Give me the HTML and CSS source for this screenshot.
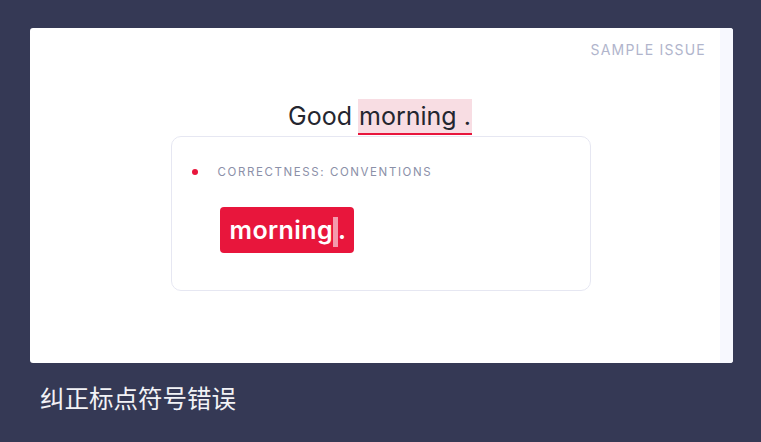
FILE: index.html
```html
<!DOCTYPE html>
<html>
<head>
<meta charset="utf-8">
<link rel="stylesheet" href="styles.css">
</head>
<body>
<div class="page">
  <div class="panel">
    <div class="panel-main">
      <div class="tag">SAMPLE ISSUE</div>
      <div class="sentence">Good <span class="flag">morning .</span></div>
      <div class="card">
        <div class="card-head"><span class="dot"></span><span class="label">CORRECTNESS: CONVENTIONS</span></div>
        <div class="fix"><span class="fix-word">morning</span><span class="caret"></span><span class="fix-word">.</span></div>
      </div>
    </div>
    <div class="panel-strip"></div>
  </div>
  <div class="caption">纠正标点符号错误</div>
</div>
</body>
</html>
```
FILE: styles.css
```css
html, body {
  margin: 0;
  padding: 0;
}
body {
  background: #353955;
  width: 761px;
  height: 442px;
  overflow: hidden;
  font-family: Inter, "Noto Sans", sans-serif;
}
.page {
  padding: 28px 28px 0 30px;
}
.panel {
  display: flex;
  width: 703px;
  height: 335px;
  background: #ffffff;
  border-radius: 3px;
  overflow: hidden;
}
.panel-main {
  flex: 1;
  display: flex;
  flex-direction: column;
  align-items: center;
}
.panel-strip {
  width: 13px;
  background: #f7f8fe;
}
.tag {
  align-self: flex-end;
  margin-top: 13px;
  margin-right: 14px;
  font-size: 14px;
  letter-spacing: 1.2px;
  color: #b1b5cc;
  line-height: 18px;
}
.sentence {
  margin-top: 40px;
  margin-left: 10px;
  font-size: 25px;
  color: #24262f;
  line-height: 34px;
  height: 36px;
  display: flex;
  align-items: stretch;
}
.flag {
  background: #f8dde3;
  border-bottom: 2px solid #e8163c;
  margin-left: 6px;
  padding: 0 1px;
}
.card {
  box-sizing: border-box;
  width: 420px;
  height: 155px;
  margin-top: 1px;
  margin-left: 11px;
  border: 1.5px solid #e6e7f2;
  border-radius: 10px;
  padding: 28px 0 0 20px;
}
.card-head {
  display: flex;
  align-items: center;
  height: 14px;
}
.dot {
  width: 6px;
  height: 6px;
  border-radius: 50%;
  background: #e8163c;
}
.label {
  margin-left: 20px;
  font-size: 11.5px;
  letter-spacing: 1.6px;
  color: #8b90a8;
}
.fix {
  display: inline-flex;
  align-items: center;
  margin-top: 28px;
  margin-left: 28px;
  height: 46px;
  padding: 0 8px 0 10px;
  background: #e8163c;
  border-radius: 4px;
  color: #ffffff;
  font-size: 25px;
  font-weight: 600;
  letter-spacing: 0.4px;
}
.caret {
  width: 5px;
  height: 30px;
  background: #f49aac;
  margin: 4px 0 0 0;
}
.caption {
  margin-top: 20px;
  margin-left: 10px;
  font-size: 24.5px;
  color: #f2f2f6;
  font-family: "Noto Sans CJK SC", sans-serif;
  line-height: 30px;
}
```
